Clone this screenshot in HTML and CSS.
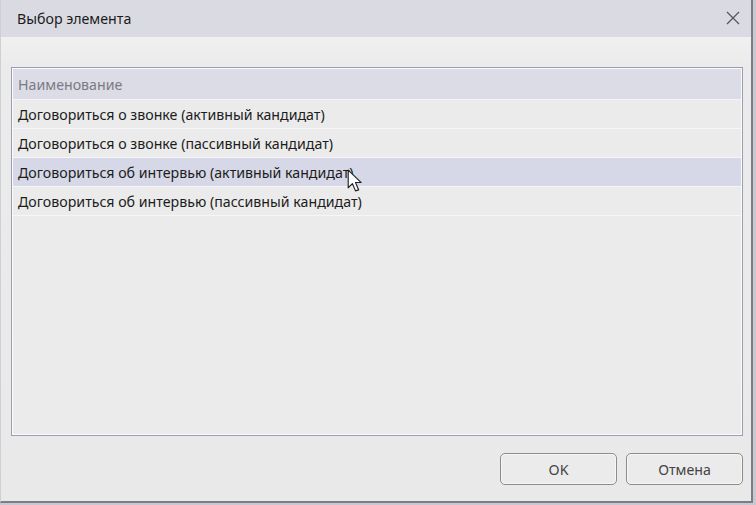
FILE: index.html
```html
<!DOCTYPE html>
<html lang="ru">
<head>
<meta charset="utf-8">
<title>Выбор элемента</title>
<link rel="stylesheet" href="styles.css">
</head>
<body>
<div class="window">
  <div class="titlebar">
    <span class="title">Выбор элемента</span>
    <span class="close">
      <svg width="14" height="14" viewBox="0 0 14 14"><path d="M1 1 L13 13 M13 1 L1 13" stroke="#555" stroke-width="1.2" fill="none"/></svg>
    </span>
  </div>
  <div class="content">
    <div class="list">
      <div class="row header">Наименование</div>
      <div class="row">Договориться о звонке (активный кандидат)</div>
      <div class="row">Договориться о звонке (пассивный кандидат)</div>
      <div class="row hover">Договориться об интервью (активный кандидат)
        <svg class="cursor" width="17" height="25" viewBox="0 0 16 24"><path d="M1 1 L1 18 L5 14 L8 21 L11 20 L8 13 L13.5 13 Z" fill="#fff" stroke="#222" stroke-width="1.1" stroke-linejoin="round"/></svg>
      </div>
      <div class="row">Договориться об интервью (пассивный кандидат)</div>
    </div>
    <div class="footer">
      <button class="btn">OK</button>
      <button class="btn">Отмена</button>
    </div>
  </div>
</div>
</body>
</html>
```

FILE: styles.css
```css
html, body {
  margin: 0;
  padding: 0;
  background: #c8c8d0;
}
body {
  width: 756px;
  height: 505px;
  overflow: hidden;
  font-family: "Noto Sans", "Open Sans", sans-serif;
  font-size: 14.2px;
  color: #1c1c1c;
}
.window {
  width: 753px;
  height: 503px;
  border-right: 2px solid #7c7c86;
  border-bottom: 2px solid #7c7c86;
  border-left: 1px solid #cfcfd6;
  box-sizing: border-box;
  display: flex;
  flex-direction: column;
  background: #ececec;
}
.titlebar {
  height: 37px;
  flex: none;
  background: #dadae2;
  display: flex;
  align-items: center;
  justify-content: space-between;
  padding: 0 11px 0 16px;
  box-sizing: border-box;
}
.title {
  font-size: 14.2px;
  color: #1a1a1a;
  margin-top: -1px;
}
.close {
  display: flex;
  margin-top: -2px;
}
.content {
  flex: 1;
  display: flex;
  flex-direction: column;
  padding: 30px 8px 0 10px;
  background: linear-gradient(#f0f0f0, #ebebeb 30px, #e9e9e9);
}
.list {
  height: 369px;
  border: 1px solid #9d9db2;
  box-shadow: inset 0 0 0 1px #fbfbfd;
  padding: 1px;
  box-sizing: border-box;
  background: #ebebeb;
  display: flex;
  flex-direction: column;
}
.row {
  position: relative;
  height: 28px;
  flex: none;
  display: flex;
  align-items: center;
  padding-left: 5px;
  border-bottom: 1px solid #f6f6f8;
  white-space: nowrap;
}
.row.header {
  height: 30px;
  background: #dcdce6;
  color: #7a7a84;
  border-bottom: 1px solid #f4f4f8;
}
.row.hover {
  background: #d7d8e7;
}
.cursor {
  position: absolute;
  left: 334px;
  top: 11px;
}
.footer {
  display: flex;
  justify-content: flex-end;
  gap: 9px;
  padding: 17px 0 0 0;
}
.btn {
  width: 117px;
  height: 32px;
  border: 1.5px solid #8c8c8c;
  border-radius: 5px;
  background: #ebebeb;
  font-family: "Noto Sans", "Open Sans", sans-serif;
  font-size: 14.2px;
  color: #444;
  box-shadow: inset 0 0 0 1px #f6f6f6;
}
```
